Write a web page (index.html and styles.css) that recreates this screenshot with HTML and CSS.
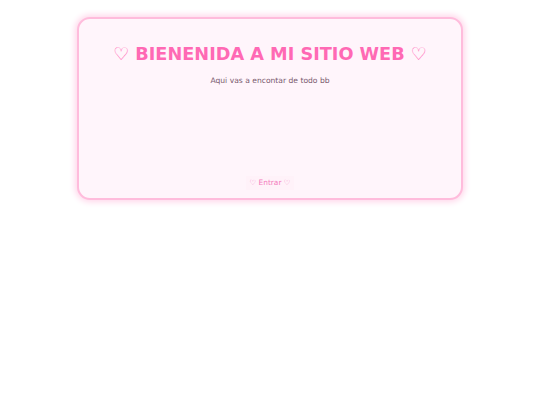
FILE: index.html
```html
<!DOCTYPE html>
<html>
<head>
	<title>Bienvenida</title>
	<link rel="stylesheet" href="styles.css">
</head>
<body>
	<div class="card">
		<h1 class="title">♡ BIENENIDA A MI SITIO WEB ♡</h1>
		<p class="subtitle">Aqui vas a encontar de todo bb</p>
		<div class="space"></div>
		<a class="enter" href="#">♡ Entrar ♡</a>
	</div>
</body>
</html>
```
FILE: styles.css
```css
body{
	margin: 0;
	padding: 17px 0;
	background-color: #ffffff;
	font-family: "DejaVu Sans", Verdana, sans-serif;
}
.card{
	box-sizing: border-box;
	width: 386px;
	margin: 0 auto;
	padding: 25px 20px 8px;
	background-color: #fff5fb;
	border: 2px solid #ffbcdc;
	border-radius: 13px;
	box-shadow: 0 0 6px 2px #ffd6ea;
	text-align: center;
}
.title{
	margin: 0;
	font-size: 17.7px;
	line-height: 21px;
	color: #ff69b4;
}
.subtitle{
	margin: 11px 0 0;
	font-size: 7.6px;
	line-height: 10px;
	color: #7a5a6e;
}
.space{
	height: 84px;
}
.enter{
	display: inline-block;
	padding: 2px 4px;
	font-size: 7.4px;
	line-height: 10px;
	color: #f47cbd;
	background-color: #fff2f9;
	text-decoration: none;
}
```
